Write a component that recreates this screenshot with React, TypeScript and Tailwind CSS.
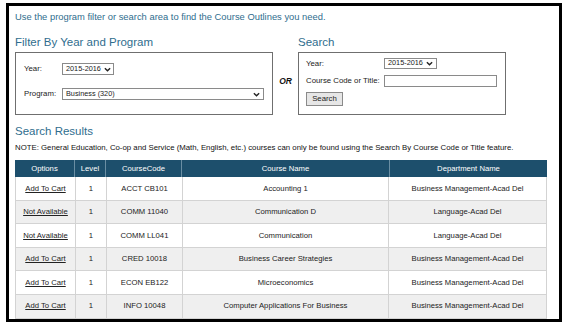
import React from 'react';

type Row = { option: string; level: string; code: string; name: string; dept: string };

const rows: Row[] = [
  { option: 'Add To Cart', level: '1', code: 'ACCT CB101', name: 'Accounting 1', dept: 'Business Management-Acad Del' },
  { option: 'Not Available', level: '1', code: 'COMM 11040', name: 'Communication D', dept: 'Language-Acad Del' },
  { option: 'Not Available', level: '1', code: 'COMM LL041', name: 'Communication', dept: 'Language-Acad Del' },
  { option: 'Add To Cart', level: '1', code: 'CRED 10018', name: 'Business Career Strategies', dept: 'Business Management-Acad Del' },
  { option: 'Add To Cart', level: '1', code: 'ECON EB122', name: 'Microeconomics', dept: 'Business Management-Acad Del' },
  { option: 'Add To Cart', level: '1', code: 'INFO 10048', name: 'Computer Applications For Business', dept: 'Business Management-Acad Del' },
];

const Chevron = () => (
  <svg className="w-[7px] h-[5px] shrink-0" viewBox="0 0 8 5" fill="none" stroke="#222" strokeWidth={1.6}>
    <path d="M1 1l3 3 3-3" />
  </svg>
);

const FakeSelect: React.FC<{ value: string; className: string }> = ({ value, className }) => (
  <div className={`flex items-center justify-between gap-[3px] whitespace-nowrap border border-[#8a8a8a] bg-white px-[3px] text-[7.3px] text-[#222] ${className}`}>
    <span>{value}</span>
    <Chevron />
  </div>
);

const cols = ['w-[60px]', 'w-[31px]', 'w-[76px]', 'flex-1', 'w-[157px]'];

const App: React.FC = () => {
  return (
    <div className="w-[567px] h-[330px] bg-white overflow-hidden font-['Liberation_Sans',Arial,sans-serif]">
      <div className="ml-[6px] mt-[3px] w-[556px] h-[319px] border-[3px] border-black overflow-hidden px-[6px] pt-[5px]">
        <p className="text-[9.4px] leading-[12px] text-[#2f6d8e] whitespace-nowrap">
          Use the program filter or search area to find the Course Outlines you need.
        </p>

        <div className="flex mt-[12px] h-[85px]">
          <div className="w-[258px] flex flex-col">
            <h2 className="text-[11.5px] leading-[14px] text-[#2f6d8e]">Filter By Year and Program</h2>
            <div className="mt-[3px] h-[63px] border border-[#6f6f6f] px-[8px] pt-[10px] text-[7.8px] text-[#222]">
              <div className="flex items-center h-[12px]">
                <span className="w-[38px]">Year:</span>
                <FakeSelect value="2015-2016" className="w-[52px] h-[12px]" />
              </div>
              <div className="flex items-center h-[12px] mt-[13px]">
                <span className="w-[38px]">Program:</span>
                <FakeSelect value="Business (320)" className="w-[202px] h-[12px]" />
              </div>
            </div>
          </div>

          <div className="w-[25px] flex items-center justify-center pt-[8px]">
            <span className="text-[8.5px] font-bold italic text-[#111]">OR</span>
          </div>

          <div className="w-[208px] flex flex-col">
            <h2 className="text-[11.5px] leading-[14px] text-[#2f6d8e]">Search</h2>
            <div className="mt-[3px] h-[63px] border border-[#6f6f6f] px-[7px] pt-[5px] text-[7.8px] text-[#222]">
              <div className="flex items-center h-[11px]">
                <span className="w-[78px]">Year:</span>
                <FakeSelect value="2015-2016" className="w-[53px] h-[11px]" />
              </div>
              <div className="flex items-center h-[12px] mt-[6px]">
                <span className="w-[78px]">Course Code or Title:</span>
                <div className="w-[113px] h-[12px] border border-[#8a8a8a] bg-white" />
              </div>
              <button className="mt-[5px] h-[14px] w-[37px] border border-[#8a8a8a] bg-[#e6e6e6] text-[7.8px] text-[#222] leading-none">
                Search
              </button>
            </div>
          </div>
        </div>

        <h2 className="mt-[4px] text-[11.5px] leading-[14px] text-[#2f6d8e]">Search Results</h2>
        <p className="mt-[4px] text-[7.8px] leading-[12px] text-[#111] whitespace-nowrap">
          NOTE: General Education, Co-op and Service (Math, English, etc.) courses can only be found using the Search By Course Code or Title feature.
        </p>

        <div className="mt-[6px] w-[532px] text-[7.7px]">
          <div className="flex h-[17px] bg-[#1d4f6c] text-white">
            {['Options', 'Level', 'CourseCode', 'Course Name', 'Department Name'].map((h, i) => (
              <div key={h} className={`${cols[i]} flex items-center justify-center border-r border-[#6a8ea3] last:border-r-0`}>
                {h}
              </div>
            ))}
          </div>
          {rows.map((r, idx) => (
            <div
              key={r.code}
              className={`flex h-[23.6px] border-b border-x border-[#d3d3d3] text-[#222] ${idx % 2 === 0 ? 'bg-white' : 'bg-[#efefef]'}`}
            >
              <div className={`${cols[0]} flex items-center justify-center border-r border-[#d3d3d3] underline`}>{r.option}</div>
              <div className={`${cols[1]} flex items-center justify-center border-r border-[#d3d3d3]`}>{r.level}</div>
              <div className={`${cols[2]} flex items-center justify-center border-r border-[#d3d3d3]`}>{r.code}</div>
              <div className={`${cols[3]} flex items-center justify-center border-r border-[#d3d3d3]`}>{r.name}</div>
              <div className={`${cols[4]} flex items-center justify-center`}>{r.dept}</div>
            </div>
          ))}
        </div>
      </div>
    </div>
  );
};

export default App;
